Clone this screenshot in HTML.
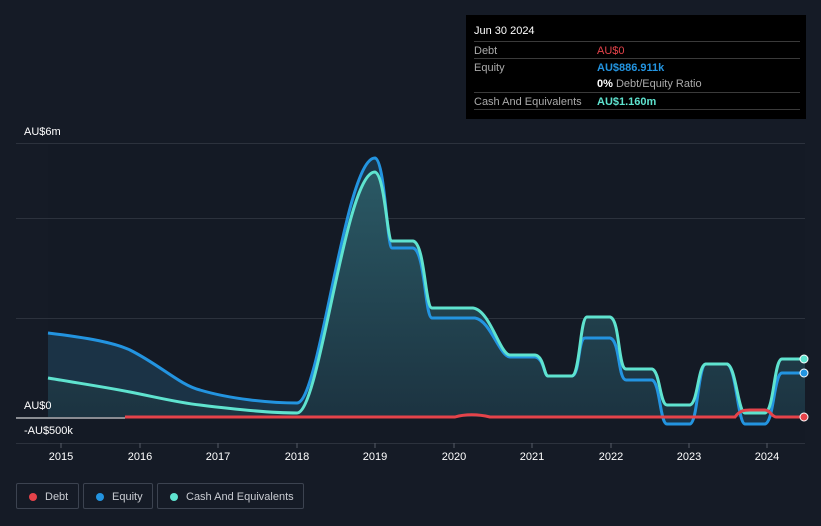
<!DOCTYPE html>
<html><head><style>
body{margin:0;background:#151b26;font-family:"Liberation Sans",sans-serif;}
.w{position:relative;width:821px;height:526px;overflow:hidden;background:#151b26;}
.tt{position:absolute;left:466px;top:15px;width:340px;height:104px;background:#000;color:#fff;font-size:11px;}
.tt .r{position:absolute;left:8px;right:6px;height:17px;border-top:1px solid #3a3a3a;}
.tt span{position:absolute;top:3px;}
.lbl{position:absolute;color:#fff;font-size:11px;}
.lg{position:absolute;top:483px;height:26px;border:1px solid #3c4350;border-radius:2px;color:#c9ccd2;font-size:11px;line-height:26px;box-sizing:border-box;}
.lg i{position:absolute;left:12px;top:9px;width:8px;height:8px;border-radius:50%;}
</style></head><body><div class="w">
<svg width="821" height="526" style="position:absolute;left:0;top:0">
<defs><linearGradient id="g" x1="0" y1="0" x2="0" y2="1"><stop offset="0" stop-color="#2c5d68" stop-opacity=".9"/><stop offset="1" stop-color="#1c3340" stop-opacity=".9"/></linearGradient></defs>
<rect x="48" y="143" width="757" height="300" fill="#141a25"/>
<g stroke="#2c323d" stroke-width="1">
<line x1="16" y1="143.5" x2="805" y2="143.5"/><line x1="16" y1="218.5" x2="805" y2="218.5"/><line x1="16" y1="318.5" x2="805" y2="318.5"/><line x1="16" y1="443.5" x2="805" y2="443.5"/></g>
<path d="M48,333 C90,338 115,343 130,350 C160,365 180,385 200,390 C230,399 270,403 297,403 C320,403 345,158 375,158 C385,160 387,248 392,248 L413,248 C425,250 425,318 432,318 L475,318 C490,320 500,357 510,357 L535,357 C544,358 544,376 548,376 L572,376 C580,375 578,338 585,338 L610,338 C620,340 618,380 626,380 L652,380 C660,382 660,424 667,424 L690,424 C698,422 698,364 706,364 L727,364 C736,366 738,424 745,424 L765,424 C774,422 774,373 782,373 L805,373 L805,417 L48,417Z" fill="#1d3a4f" opacity=".8"/>
<path d="M48,378 C90,385 110,388 130,392 C160,398 180,403 200,405 C240,410 270,413 297,413 C320,413 345,172 375,172 C385,175 387,241 392,241 L413,241 C425,243 425,308 432,308 L473,308 C490,310 500,355 510,355 L535,355 C544,356 544,376 548,376 L572,376 C580,375 580,317 587,317 L610,317 C620,319 618,369 626,369 L652,369 C660,371 660,405 667,405 L690,405 C698,403 698,364 706,364 L727,364 C736,366 738,413 745,413 L765,413 C774,411 774,359 782,359 L805,359 L805,417 L48,417Z" fill="url(#g)"/>
<path d="M48,333 C90,338 115,343 130,350 C160,365 180,385 200,390 C230,399 270,403 297,403 C320,403 345,158 375,158 C385,160 387,248 392,248 L413,248 C425,250 425,318 432,318 L475,318 C490,320 500,357 510,357 L535,357 C544,358 544,376 548,376 L572,376 C580,375 578,338 585,338 L610,338 C620,340 618,380 626,380 L652,380 C660,382 660,424 667,424 L690,424 C698,422 698,364 706,364 L727,364 C736,366 738,424 745,424 L765,424 C774,422 774,373 782,373 L805,373" fill="none" stroke="#2394e0" stroke-width="3"/>
<path d="M48,378 C90,385 110,388 130,392 C160,398 180,403 200,405 C240,410 270,413 297,413 C320,413 345,172 375,172 C385,175 387,241 392,241 L413,241 C425,243 425,308 432,308 L473,308 C490,310 500,355 510,355 L535,355 C544,356 544,376 548,376 L572,376 C580,375 580,317 587,317 L610,317 C620,319 618,369 626,369 L652,369 C660,371 660,405 667,405 L690,405 C698,403 698,364 706,364 L727,364 C736,366 738,413 745,413 L765,413 C774,411 774,359 782,359 L805,359" fill="none" stroke="#5fe3cf" stroke-width="3"/>
<line x1="16" y1="418" x2="125" y2="418" stroke="#fff" stroke-width="1"/>
<path d="M125,417 L455,417 C465,414 478,414 490,417 L735,417 C740,410 745,410 750,410 L765,410 C770,410 772,417 776,417 L805,417" fill="none" stroke="#e5434a" stroke-width="3"/>
<circle cx="804" cy="359" r="4" fill="#5fe3cf" stroke="#fff" stroke-width="1"/>
<circle cx="804" cy="373" r="4" fill="#2394e0" stroke="#fff" stroke-width="1"/>
<circle cx="804" cy="417" r="4" fill="#e5434a" stroke="#fff" stroke-width="1"/>
<g stroke="#555b66"><line x1="61" y1="443" x2="61" y2="448"/><line x1="140" y1="443" x2="140" y2="448"/><line x1="218" y1="443" x2="218" y2="448"/><line x1="297" y1="443" x2="297" y2="448"/><line x1="375" y1="443" x2="375" y2="448"/><line x1="454" y1="443" x2="454" y2="448"/><line x1="532" y1="443" x2="532" y2="448"/><line x1="611" y1="443" x2="611" y2="448"/><line x1="689" y1="443" x2="689" y2="448"/><line x1="767" y1="443" x2="767" y2="448"/></g>
<g fill="#fff" font-size="11" text-anchor="middle" font-family="Liberation Sans"><text x="61" y="460">2015</text><text x="140" y="460">2016</text><text x="218" y="460">2017</text><text x="297" y="460">2018</text><text x="375" y="460">2019</text><text x="454" y="460">2020</text><text x="532" y="460">2021</text><text x="611" y="460">2022</text><text x="689" y="460">2023</text><text x="767" y="460">2024</text></g>
</svg>
<div class="lbl" style="left:24px;top:126px">AU$6m</div>
<div class="lbl" style="left:24px;top:400px">AU$0</div>
<div class="lbl" style="left:24px;top:425px">-AU$500k</div>
<div class="tt">
<div style="position:absolute;left:8px;top:10px">Jun 30 2024</div>
<div class="r" style="top:26px"><span style="color:#aaa">Debt</span><span style="left:123px;color:#e5434a">AU$0</span></div>
<div class="r" style="top:43px"><span style="color:#aaa">Equity</span><span style="left:123px;color:#2394e0;font-weight:bold">AU$886.911k</span></div>
<div class="r" style="top:60px;border:none"><span style="left:123px"><b>0%</b> <span style="position:static;color:#aaa">Debt/Equity Ratio</span></span></div>
<div class="r" style="top:77px"><span style="color:#aaa">Cash And Equivalents</span><span style="left:123px;color:#5fe3cf;font-weight:bold">AU$1.160m</span></div>
<div class="r" style="top:94px;height:0"></div>
</div>
<div class="lg" style="left:16px;width:63px"><i style="background:#e5434a"></i><span style="position:absolute;left:28px">Debt</span></div>
<div class="lg" style="left:83px;width:70px"><i style="background:#2394e0"></i><span style="position:absolute;left:28px">Equity</span></div>
<div class="lg" style="left:157px;width:147px"><i style="background:#5fe3cf"></i><span style="position:absolute;left:28px">Cash And Equivalents</span></div>
</div></body></html>
